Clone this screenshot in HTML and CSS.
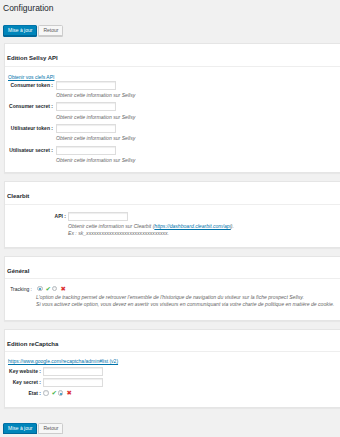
FILE: index.html
```html
<!DOCTYPE html>
<html lang="fr">
<head>
    <meta charset="UTF-8">
    <meta name="viewport" content="width=device-width, initial-scale=1.0">
    <title>Configuration</title>
    <link rel="stylesheet" href="styles.css">
</head>
<body>
    <div class="wrap">
        <h1>Configuration</h1>
        <div class="actions">
            <button class="button button-primary">Mise à jour</button>
            <button class="button">Retour</button>
        </div>

        <div class="postbox">
            <h2 class="hndle">Edition Sellsy API</h2>
            <div class="inside inside-sellsy">
                <a class="link" href="#">Obtenir vos clefs API</a>
                <div class="form form-sellsy">
                    <label>Consumer token :</label>
                    <div class="field">
                        <input type="text">
                        <p class="hint">Obtenir cette information sur Sellsy</p>
                    </div>
                    <label>Consumer secret :</label>
                    <div class="field">
                        <input type="text">
                        <p class="hint">Obtenir cette information sur Sellsy</p>
                    </div>
                    <label>Utilisateur token :</label>
                    <div class="field">
                        <input type="text">
                        <p class="hint">Obtenir cette information sur Sellsy</p>
                    </div>
                    <label>Utilisateur secret :</label>
                    <div class="field">
                        <input type="text">
                        <p class="hint">Obtenir cette information sur Sellsy</p>
                    </div>
                </div>
            </div>
        </div>

        <div class="postbox">
            <h2 class="hndle">Clearbit</h2>
            <div class="inside inside-clearbit">
                <div class="form form-clearbit">
                    <label>API :</label>
                    <div class="field">
                        <input type="text">
                        <p class="hint">Obtenir cette information sur Clearbit (<a href="#">https://dashboard.clearbit.com/api</a>).<br>Ex : sk_xxxxxxxxxxxxxxxxxxxxxxxxxxxxxxxx.</p>
                    </div>
                </div>
            </div>
        </div>

        <div class="postbox">
            <h2 class="hndle">Général</h2>
            <div class="inside inside-general">
                <div class="form form-general">
                    <label class="label-plain">Tracking :</label>
                    <div class="field">
                        <div class="choices">
                            <input type="radio" name="tracking" checked><span class="icon-yes">✔</span>
                            <input type="radio" name="tracking"><span class="icon-no">✖</span>
                        </div>
                        <p class="hint">L'option de tracking permet de retrouver l'ensemble de l'historique de navigation du visiteur sur la fiche prospect Sellsy.<br>Si vous activez cette option, vous devez en avertir vos visiteurs en communiquant via votre charte de politique en matière de cookie.</p>
                    </div>
                </div>
            </div>
        </div>

        <div class="postbox">
            <h2 class="hndle">Edition reCaptcha</h2>
            <div class="inside inside-recaptcha">
                <a class="link" href="#">https://www.google.com/recaptcha/admin#list (v2)</a>
                <div class="form form-recaptcha">
                    <label>Key website :</label>
                    <input type="text">
                    <label>Key secret :</label>
                    <input type="text">
                    <label>Etat :</label>
                    <div class="choices choices-row">
                        <input type="radio" name="etat"><span class="icon-yes">✔</span>
                        <input type="radio" name="etat" checked><span class="icon-no">✖</span>
                    </div>
                </div>
            </div>
        </div>

        <div class="actions actions-bottom">
            <button class="button button-primary">Mise à jour</button>
            <button class="button">Retour</button>
        </div>
    </div>
</body>
</html>
```

FILE: styles.css
```css
* {
    margin: 0;
    padding: 0;
    box-sizing: border-box;
}

html, body {
    overflow: hidden;
}

body {
    background-color: #f1f1f1;
    color: #23282d;
    font-family: 'Liberation Sans', Arial, sans-serif;
    font-size: 5px;
    line-height: 7px;
}

.wrap {
    padding-left: 4px;
}

h1 {
    font-size: 8.5px;
    font-weight: normal;
    line-height: 10px;
    margin-top: 2.5px;
    margin-left: -1px;
}

.actions {
    display: flex;
    gap: 1px;
    margin-top: 12px;
    margin-left: -1px;
}

.actions-bottom {
    margin-top: 15.5px;
}

.button {
    height: 11px;
    padding: 0 4px;
    font-family: inherit;
    font-size: 5px;
    line-height: 9px;
    color: #555;
    background-color: #f7f7f7;
    border: 1px solid #ccc;
    border-radius: 1.5px;
    box-shadow: 0 1px 0 #ccc;
}

.button-primary {
    color: #fff;
    background-color: #0085ba;
    border-color: #0073aa #006799 #006799;
    box-shadow: 0 1px 0 #006799;
}

.postbox {
    background-color: #fff;
    border: 1px solid #e5e5e5;
    border-right: none;
    box-shadow: 0 1px 1px rgba(0, 0, 0, 0.04);
    margin-top: 8px;
}

.actions + .postbox {
    margin-top: 7.5px;
}

.hndle {
    font-size: 6px;
    font-weight: bold;
    line-height: 8px;
    padding: 10px 0 3.5px 2px;
    border-bottom: 1px solid #eee;
}

.inside {
    padding: 7px 3px 8px;
}

.inside-clearbit {
    padding-bottom: 9.5px;
}

.inside-general {
    padding-top: 6.5px;
    padding-bottom: 11.5px;
}

.inside-recaptcha {
    padding-top: 6px;
    padding-bottom: 9px;
}

.link, .hint a {
    color: #0073aa;
    text-decoration: underline;
}

.link {
    display: block;
    line-height: 6px;
    margin-bottom: 1px;
}

.inside-recaptcha .link {
    margin-bottom: 2.5px;
}

.form {
    display: grid;
    align-items: start;
}

.form label {
    font-weight: bold;
    text-align: right;
    line-height: 9px;
}

.form .label-plain {
    font-weight: normal;
    line-height: 6px;
}

.form-sellsy {
    grid-template-columns: 45px auto;
    column-gap: 3px;
    row-gap: 3.2px;
}

.form-clearbit {
    grid-template-columns: 58px auto;
    column-gap: 2px;
}

.form-general {
    grid-template-columns: 24px auto;
    column-gap: 4px;
}

.form-recaptcha {
    grid-template-columns: 33px auto;
    column-gap: 2px;
    row-gap: 2px;
}

input[type="text"] {
    display: block;
    width: 60px;
    height: 9px;
    background-color: #fff;
    border: 1px solid #ddd;
    box-shadow: inset 0 1px 1px rgba(0, 0, 0, 0.07);
    outline: none;
}

.hint {
    color: #666;
    font-size: 5.1px;
    font-style: italic;
    line-height: 7px;
    margin-top: 2.5px;
    white-space: nowrap;
}

.choices {
    display: flex;
    align-items: center;
    height: 6px;
    margin-left: 1px;
}

.choices-row {
    height: 9px;
    margin-left: 0;
}

input[type="radio"] {
    appearance: none;
    width: 5.5px;
    height: 5.5px;
    border: 0.7px solid #b4b9be;
    border-radius: 50%;
    background-color: #fff;
    box-shadow: inset 0 1px 1px rgba(0, 0, 0, 0.1);
    margin-right: 3px;
    position: relative;
}

input[type="radio"]:checked::before {
    content: '';
    position: absolute;
    left: 1.2px;
    top: 1.2px;
    width: 2px;
    height: 2px;
    border-radius: 50%;
    background-color: #1e8cbe;
}

.icon-yes, .icon-no {
    font-family: 'DejaVu Sans', sans-serif;
    font-size: 6.5px;
    line-height: 6px;
    margin-right: 1px;
}

.icon-yes {
    color: #46b450;
}

.icon-no {
    color: #dc3232;
}
```
